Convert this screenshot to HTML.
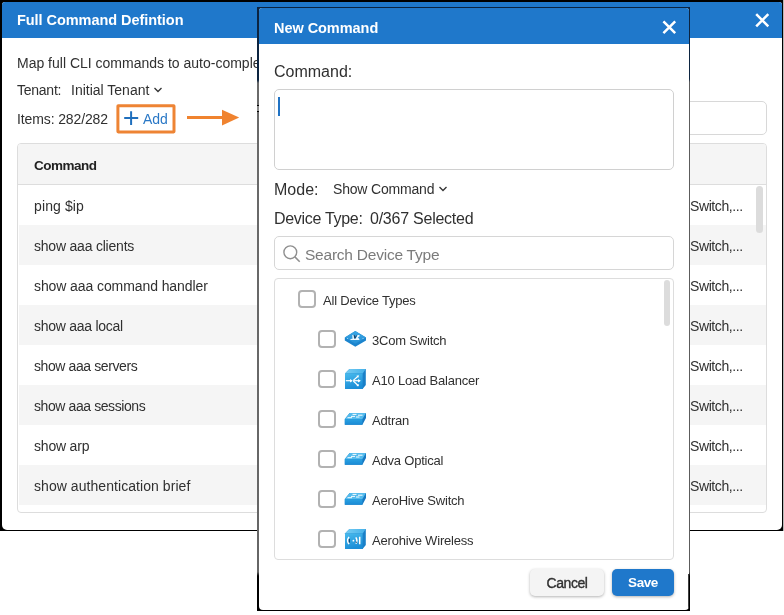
<!DOCTYPE html>
<html><head><meta charset="utf-8"><title>New Command</title>
<style>
*{box-sizing:border-box;margin:0;padding:0}
html,body{width:784px;height:615px;overflow:hidden;background:#fff}
body{position:relative;font-family:"Liberation Sans",sans-serif;color:#303030;font-size:14px}
.abs{position:absolute}
.t{position:absolute;white-space:nowrap;line-height:20px;height:20px;will-change:transform}
#frame1{left:0;top:0;width:783px;height:531px;background:#000;border-right:0}
#dlg1{left:2px;top:2px;width:780px;height:528px;background:#fff;border-radius:3px 3px 5px 5px;overflow:hidden}
#hdr1{left:0;top:0;width:780px;height:36px;background:#1f78cb}
#dlg2{left:259px;top:8px;width:430px;height:602px;background:#fff;border-radius:3px 3px 4px 4px;overflow:hidden}
#hdr2{left:0;top:0;width:430px;height:36px;background:#1f78cb}
.ttl{color:#fff;font-weight:bold;font-size:14.5px;letter-spacing:-.05px}
.row{position:absolute;left:1px;width:747px;height:40px}
.g{background:#f5f5f5}
.cb{position:absolute;width:18px;height:18px;border:2px solid #b2b2b2;border-radius:4px;background:#fff}
.lbl{font-size:13px;letter-spacing:-.2px}
.big{font-size:16px}
.sw{letter-spacing:-.4px}
</style></head><body>
<div class="abs" style="left:783px;top:0;width:1px;height:531px;background:#b8b8b8"></div>
<div id="frame1" class="abs"></div>
<div id="dlg1" class="abs">
  <div id="hdr1" class="abs"></div>
  <div class="t ttl" style="left:15px;top:7.7px;">Full Command Defintion</div>
  <svg class="abs" style="left:752px;top:10px" width="17" height="17" viewBox="0 0 17 17"><path d="M2.2 2.2L14.3 14.3M14.3 2.2L2.2 14.3" stroke="#fff" stroke-width="2.5" fill="none"/></svg>
  <div class="t " style="left:15px;top:51px;">Map full CLI commands to auto-complete in the CLI window.</div>
  <div class="t " style="left:15px;top:78px;letter-spacing:-.25px">Tenant:</div>
  <div class="t " style="left:69px;top:78px;">Initial Tenant</div>
  <svg class="abs" style="left:151px;top:84px" width="10" height="8" viewBox="0 0 10 8"><path d="M1.5 2L5 5.5L8.5 2" stroke="#333" stroke-width="1.3" fill="none"/></svg>
  <div class="t " style="left:15px;top:106.7px;letter-spacing:-.12px">Items: 282/282</div>
  <svg class="abs" style="left:112px;top:100px" width="66" height="36" viewBox="0 0 66 36"><rect x="3.9" y="3.8" width="56.1" height="26.1" rx="0.3" fill="none" stroke="#ee8434" stroke-width="3"/></svg>
  <svg class="abs" style="left:121px;top:108px" width="17" height="16" viewBox="0 0 17 16"><path d="M8.1 1.2V15M1.2 8.1H15.2" stroke="#1f6fbd" stroke-width="2" fill="none"/></svg>
  <div class="t " style="left:141px;top:106.7px;color:#2a78c6">Add</div>
  <svg class="abs" style="left:183px;top:105px" width="58" height="22" viewBox="0 0 58 22"><path d="M2 10.6H39" stroke="#f0832f" stroke-width="3" fill="none"/><path d="M37 2.8L54.2 10.6L37 18.4Z" fill="#f0832f"/></svg>
  <div class="abs" style="left:400px;top:99px;width:365px;height:34px;border:1px solid #d8d8d8;border-radius:5px"></div>
  <div id="tbl" class="abs" style="left:15px;top:141px;width:750px;height:370px;border:1px solid #ddd;border-radius:4px;overflow:hidden;background:#fff">
    <div class="abs g" style="left:0;top:0;width:748px;height:41px;border-bottom:1px solid #ddd"></div>
    <div class="t " style="left:16px;top:12px;font-weight:bold;font-size:13.5px;letter-spacing:-.5px;color:#222">Command</div>
    <div class="row" style="top:41px"><div class="t " style="left:15px;top:11px;letter-spacing:0.12px">ping $ip</div><div class="t sw" style="left:671px;top:11px;">Switch,...</div></div>
    <div class="row g" style="top:81px"><div class="t " style="left:15px;top:11px;letter-spacing:-0.21px">show aaa clients</div><div class="t sw" style="left:671px;top:11px;">Switch,...</div></div>
    <div class="row" style="top:121px"><div class="t " style="left:15px;top:11px;letter-spacing:-0.09px">show aaa command handler</div><div class="t sw" style="left:671px;top:11px;">Switch,...</div></div>
    <div class="row g" style="top:161px"><div class="t " style="left:15px;top:11px;letter-spacing:-0.27px">show aaa local</div><div class="t sw" style="left:671px;top:11px;">Switch,...</div></div>
    <div class="row" style="top:201px"><div class="t " style="left:15px;top:11px;letter-spacing:-0.4px">show aaa servers</div><div class="t sw" style="left:671px;top:11px;">Switch,...</div></div>
    <div class="row g" style="top:241px"><div class="t " style="left:15px;top:11px;letter-spacing:-0.41px">show aaa sessions</div><div class="t sw" style="left:671px;top:11px;">Switch,...</div></div>
    <div class="row" style="top:281px"><div class="t " style="left:15px;top:11px;letter-spacing:-0.19px">show arp</div><div class="t sw" style="left:671px;top:11px;">Switch,...</div></div>
    <div class="row g" style="top:321px"><div class="t " style="left:15px;top:11px;letter-spacing:0.06px">show authentication brief</div><div class="t sw" style="left:671px;top:11px;">Switch,...</div></div>
    <div class="abs" style="left:738px;top:42px;width:7px;height:47px;background:#dcdcdc;border-radius:4px"></div>
  </div>
</div>
<div class="abs" style="left:257px;top:7px;width:433px;height:604px;background:linear-gradient(#0c2440 0,#0c2440 72px,#5c5c5c 75px,#5c5c5c 565px,#000 569px)"></div>
<div class="abs" style="left:257px;top:7px;width:2px;height:604px;background:linear-gradient(#0c2440 0,#0c2440 73px,#6a6a6a 76px,#666 565px,#000 569px)"></div>
<div class="abs" style="left:257px;top:105px;width:2px;height:7px;background:linear-gradient(#000 0,#000 1px,#8a8a8a 1px,#8a8a8a 6px,#000 6px)"></div>
<div id="dlg2" class="abs">
  <div id="hdr2" class="abs"></div>
  <div class="t ttl" style="left:15px;top:9.5px;">New Command</div>
  <svg class="abs" style="left:402px;top:11px" width="17" height="17" viewBox="0 0 17 17"><path d="M2.4 2.4L14.2 14.2M14.2 2.4L2.4 14.2" stroke="#fff" stroke-width="2.5" fill="none"/></svg>
  <div class="t big" style="left:15px;top:54px;">Command:</div>
  <div class="abs" style="left:15px;top:81px;width:400px;height:81px;border:1px solid #d0d0d0;border-radius:5px"></div>
  <div class="abs" style="left:19px;top:89px;width:2px;height:19px;background:#2173c4"></div>
  <div class="t big" style="left:15px;top:172.3px;">Mode:</div>
  <div class="t " style="left:74px;top:171px;letter-spacing:-.18px">Show Command</div>
  <svg class="abs" style="left:179px;top:177.4px" width="10" height="8" viewBox="0 0 10 8"><path d="M1.5 2L5 5.5L8.5 2" stroke="#333" stroke-width="1.3" fill="none"/></svg>
  <div class="t big" style="left:15px;top:201px;letter-spacing:-.3px">Device Type:</div>
  <div class="t big" style="left:111px;top:201px;letter-spacing:-.24px">0/367 Selected</div>
  <div class="abs" style="left:15px;top:228px;width:400px;height:34px;border:1px solid #d6d6d6;border-radius:5px"></div>
  <svg class="abs" style="left:22.5px;top:236px" width="20" height="20" viewBox="0 0 20 20"><circle cx="8.3" cy="8.3" r="6.4" stroke="#8f8f8f" stroke-width="1.4" fill="none"/><path d="M12.9 12.9L17.7 17.7" stroke="#8f8f8f" stroke-width="1.5"/></svg>
  <div class="t " style="left:46px;top:236.6px;color:#7b7b7b;font-size:15.5px;letter-spacing:-.23px">Search Device Type</div>
  <div class="abs" style="left:15px;top:270px;width:400px;height:282px;border:1px solid #ddd;border-radius:4px"></div>
  <div class="abs" style="left:405px;top:272px;width:6px;height:46px;background:#dcdcdc;border-radius:3px"></div>
  <div class="cb" style="left:39px;top:282px"></div><div class="t lbl" style="left:64px;top:282.5px;">All Device Types</div>
  <div class="cb" style="left:59px;top:322px"></div>
  <svg class="abs" style="left:85px;top:322px" width="24" height="18" viewBox="0 0 24 18"><defs><linearGradient id="a0" x1="0" y1="0" x2="0" y2="1"><stop offset="0" stop-color="#3aa6e4"/><stop offset="1" stop-color="#2590d6"/></linearGradient></defs><path d="M0.8 7.5L11.3 1L22 7.5V10.5L11.3 16.8L0.8 10.5Z" fill="#1b84cd"/><path d="M0.8 7.5L11.3 1L22 7.5L11.3 13.8Z" fill="url(#a0)"/><path d="M8.3 4.9L9.6 4.7L9.9 8.2L11.8 8.4L13.6 4.9L15.6 4.9L15.4 6.6L13.8 7.2L15.3 9L15.4 10.1L6.4 10.1L6.5 9.1L8.5 8.8Z" fill="#fff" opacity=".93"/><path d="M10.1 4.9L10.9 8.4L12.4 5.6" stroke="#1c3f63" stroke-width="1" fill="none"/><circle cx="3.6" cy="8.6" r=".5" fill="#bfe3f7"/><circle cx="19" cy="8.6" r=".5" fill="#bfe3f7"/></svg>
  <div class="t lbl" style="left:113px;top:322.8px;">3Com Switch</div>
  <div class="cb" style="left:59px;top:362px"></div>
  <svg class="abs" style="left:85px;top:360px" width="24" height="24" viewBox="0 0 24 24"><defs><linearGradient id="b1" x1="0" y1="0" x2="0.3" y2="1"><stop offset="0" stop-color="#48baed"/><stop offset="1" stop-color="#1c8ed7"/></linearGradient><linearGradient id="c1" x1="0" y1="0" x2="1" y2="0"><stop offset="0" stop-color="#78cdf3"/><stop offset="1" stop-color="#45b1e9"/></linearGradient></defs><path d="M1 5.5L5.4 1H21.8V17L18.6 21H1Z" fill="#1a80c8"/><path d="M1 5.5L5.4 1H21.8L18.6 5.5Z" fill="url(#c1)"/><rect x="1" y="5.5" width="17.6" height="15.5" fill="url(#b1)"/><g stroke="#fff" stroke-width="1.2" fill="none"><path d="M1.8 12.7H8"/><path d="M9.3 12.7H16"/><path d="M9.3 12.4L14 8.2"/><path d="M9.3 13L13.3 16.8"/></g><path d="M6 11L8.8 12.7L6 14.4Z M14 11L16.9 12.7L14 14.4Z M12.4 7.8L15 7.3L14.3 9.8Z" fill="#fff"/><rect x="12.8" y="16.2" width="2" height="2" fill="#fff"/></svg>
  <div class="t lbl" style="left:113px;top:362.8px;">A10 Load Balancer</div>
  <div class="cb" style="left:59px;top:402px"></div>
  <svg class="abs" style="left:85px;top:404px" width="24" height="16" viewBox="0 0 24 16"><defs><linearGradient id="d2" x1="0" y1="0" x2="0" y2="1"><stop offset="0" stop-color="#2aa2e3"/><stop offset="1" stop-color="#1a8ad4"/></linearGradient></defs><path d="M0.8 7.1L5.7 1H22V6.1L18.4 12.7H0.8Z" fill="#1879c2"/><path d="M0.8 7.1L5.7 1H22L18.4 7.1Z" fill="#55bbec"/><rect x="0.8" y="7.1" width="17.6" height="5.6" fill="url(#d2)"/><g stroke="#fff" stroke-width="1" fill="none" opacity=".95"><path d="M8.5 2.4H12.5"/><path d="M14 3.2H18.5"/><path d="M7 4.4H11"/><path d="M3.5 5.7H8"/><path d="M12 5H15.5"/></g></svg>
  <div class="t lbl" style="left:113px;top:402.8px;">Adtran</div>
  <div class="cb" style="left:59px;top:442px"></div>
  <svg class="abs" style="left:85px;top:444px" width="24" height="16" viewBox="0 0 24 16"><defs><linearGradient id="d3" x1="0" y1="0" x2="0" y2="1"><stop offset="0" stop-color="#2aa2e3"/><stop offset="1" stop-color="#1a8ad4"/></linearGradient></defs><path d="M0.8 7.1L5.7 1H22V6.1L18.4 12.7H0.8Z" fill="#1879c2"/><path d="M0.8 7.1L5.7 1H22L18.4 7.1Z" fill="#55bbec"/><rect x="0.8" y="7.1" width="17.6" height="5.6" fill="url(#d3)"/><g stroke="#fff" stroke-width="1" fill="none" opacity=".95"><path d="M8.5 2.4H12.5"/><path d="M14 3.2H18.5"/><path d="M7 4.4H11"/><path d="M3.5 5.7H8"/><path d="M12 5H15.5"/></g></svg>
  <div class="t lbl" style="left:113px;top:442.8px;">Adva Optical</div>
  <div class="cb" style="left:59px;top:482px"></div>
  <svg class="abs" style="left:85px;top:484px" width="24" height="16" viewBox="0 0 24 16"><defs><linearGradient id="d4" x1="0" y1="0" x2="0" y2="1"><stop offset="0" stop-color="#2aa2e3"/><stop offset="1" stop-color="#1a8ad4"/></linearGradient></defs><path d="M0.8 7.1L5.7 1H22V6.1L18.4 12.7H0.8Z" fill="#1879c2"/><path d="M0.8 7.1L5.7 1H22L18.4 7.1Z" fill="#55bbec"/><rect x="0.8" y="7.1" width="17.6" height="5.6" fill="url(#d4)"/><g stroke="#fff" stroke-width="1" fill="none" opacity=".95"><path d="M8.5 2.4H12.5"/><path d="M14 3.2H18.5"/><path d="M7 4.4H11"/><path d="M3.5 5.7H8"/><path d="M12 5H15.5"/></g></svg>
  <div class="t lbl" style="left:113px;top:482.8px;">AeroHive Switch</div>
  <div class="cb" style="left:59px;top:522px"></div>
  <svg class="abs" style="left:85px;top:520px" width="24" height="24" viewBox="0 0 24 24"><defs><linearGradient id="b5" x1="0" y1="0" x2="0.3" y2="1"><stop offset="0" stop-color="#48baed"/><stop offset="1" stop-color="#1c8ed7"/></linearGradient><linearGradient id="c5" x1="0" y1="0" x2="1" y2="0"><stop offset="0" stop-color="#78cdf3"/><stop offset="1" stop-color="#45b1e9"/></linearGradient></defs><path d="M1 5.5L5.4 1H21.8V17L18.6 21H1Z" fill="#1a80c8"/><path d="M1 5.5L5.4 1H21.8L18.6 5.5Z" fill="url(#c5)"/><rect x="1" y="5.5" width="17.6" height="15.5" fill="url(#b5)"/><g stroke="#fff" stroke-width="1.5" fill="none"><path d="M5 8.9Q2.4 12.5 5 16.1"/><path d="M11.8 9.3Q14 12.5 11.8 15.7"/><path d="M15.7 8.8V16.2"/></g><circle cx="9.4" cy="12.7" r=".9" fill="#fff"/><path d="M5.3 11V14.6" stroke="#123a63" stroke-width="1.1"/><path d="M12.2 13.6V15" stroke="#123a63" stroke-width="1"/></svg>
  <div class="t lbl" style="left:113px;top:522.8px;">Aerohive Wireless</div>
  <div class="abs" style="left:271px;top:561px;width:74px;height:27px;background:#f4f4f4;border-radius:5px;box-shadow:0 1px 3px rgba(0,0,0,.3)"></div>
  <div class="t " style="left:271px;top:564.5px;width:74px;text-align:center;letter-spacing:-.45px;-webkit-text-stroke:.35px #303030">Cancel</div>
  <div class="abs" style="left:353px;top:561px;width:62px;height:27px;background:#1f78cb;border-radius:5px;box-shadow:0 1px 3px rgba(0,0,0,.3)"></div>
  <div class="t " style="left:353px;top:564.5px;width:62px;text-align:center;font-size:13.5px;letter-spacing:-.4px;color:#fff;font-weight:bold">Save</div>
  <div class="abs" style="left:429px;top:566px;width:1px;height:36px;background:rgba(0,0,0,.75)"></div>
</div>
</body></html>
